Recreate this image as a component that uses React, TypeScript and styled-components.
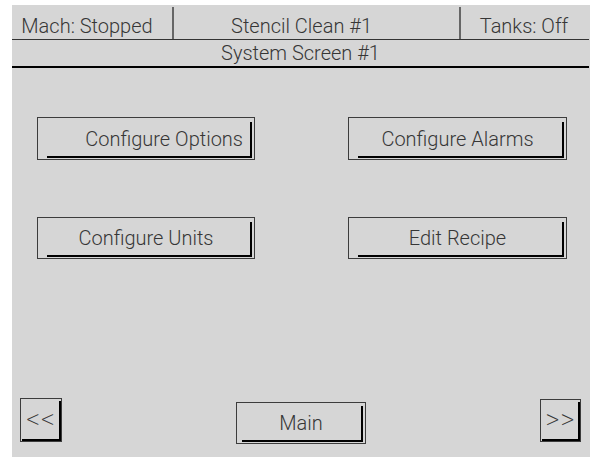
import React from "react";
import styled, { createGlobalStyle } from "styled-components";

const Global = createGlobalStyle`
  html, body { margin: 0; padding: 0; background: #ffffff; }
  body { font-family: Roboto, "Liberation Sans", sans-serif; }
`;

const Panel = styled.div`
  box-sizing: border-box;
  margin: 5px 3px 0 12px;
  width: 578px;
  height: 452px;
  background: #d6d6d6;
  color: #363636;
  font-family: Roboto, "Liberation Sans", sans-serif;
  font-weight: 300;
  font-size: 20px;
  display: flex;
  flex-direction: column;
`;

const StatusRow = styled.div`
  display: grid;
  grid-template-columns: 160px 287px 1fr;
  height: 35px;
  padding-top: 2px;
  box-sizing: border-box;
  border-bottom: 1px solid #333;
  margin-right: 1px;
`;

const StatusCell = styled.div<{ $divider?: boolean; $shift?: number }>`
  display: flex;
  align-items: flex-end;
  justify-content: center;
  border-left: ${(p) => (p.$divider ? "2px solid #666" : "none")};
  padding-left: ${(p) => (p.$shift && p.$shift > 0 ? p.$shift : 0)}px;
  padding-right: ${(p) => (p.$shift && p.$shift < 0 ? -p.$shift : 0)}px;
  padding-bottom: 3px;
  white-space: nowrap;
  line-height: 1;
`;

const TitleRow = styled.div`
  height: 26px;
  display: flex;
  align-items: center;
  justify-content: center;
  border-bottom: 2px solid #000;
  margin-right: 1px;
  line-height: 1;
`;

const ButtonGrid = styled.div`
  display: grid;
  grid-template-columns: 218px 219px;
  column-gap: 93px;
  row-gap: 57px;
  padding: 49px 0 0 25px;
`;

const PanelButton = styled.div<{
  $h: number;
  $inset: number;
  $lead: number;
  $top: number;
  $align?: "center" | "right";
  $pad?: number;
}>`
  position: relative;
  box-sizing: border-box;
  height: ${(p) => p.$h}px;
  border: 1px solid #3c3c3c;
  display: flex;
  align-items: center;
  justify-content: ${(p) => (p.$align === "right" ? "flex-end" : "center")};
  padding-right: ${(p) => p.$pad || 0}px;
  white-space: nowrap;
  line-height: 1;
  &::after {
    content: "";
    position: absolute;
    left: ${(p) => p.$lead}px;
    top: ${(p) => p.$top}px;
    right: ${(p) => p.$inset}px;
    bottom: ${(p) => Math.max(p.$inset - 1, 0)}px;
    border-right: 2px solid #000;
    border-bottom: 2px solid #000;
  }
`;

const NavRow = styled.div`
  margin-top: auto;
  margin-bottom: 13px;
  display: flex;
  justify-content: space-between;
  align-items: flex-start;
  padding: 0 9px 0 8px;
`;

const NavButton = styled(PanelButton)<{ $w: number; $dy: number; $arrow?: boolean }>`
  width: ${(p) => p.$w}px;
  margin-top: ${(p) => p.$dy}px;
  font-size: ${(p) => (p.$arrow ? 27 : 20)}px;
  font-weight: ${(p) => (p.$arrow ? 200 : 300)};
  letter-spacing: ${(p) => (p.$arrow ? "1px" : "0")};
`;

export default function App() {
  return (
    <>
      <Global />
      <Panel>
        <StatusRow>
          <StatusCell $shift={-10}>Mach: Stopped</StatusCell>
          <StatusCell $divider $shift={-30}>Stencil Clean #1</StatusCell>
          <StatusCell $divider $shift={-2}>Tanks: Off</StatusCell>
        </StatusRow>
        <TitleRow>System Screen #1</TitleRow>
        <ButtonGrid>
          <PanelButton $h={43} $inset={2} $lead={9} $top={4} $align="right" $pad={11}>
            Configure Options
          </PanelButton>
          <PanelButton $h={43} $inset={2} $lead={9} $top={4}>
            Configure Alarms
          </PanelButton>
          <PanelButton $h={42} $inset={2} $lead={9} $top={4}>
            Configure Units
          </PanelButton>
          <PanelButton $h={42} $inset={2} $lead={9} $top={4}>
            Edit Recipe
          </PanelButton>
        </ButtonGrid>
        <NavRow>
          <NavButton $arrow $w={42} $h={44} $dy={0} $inset={0} $lead={1} $top={2}>
            &lt;&lt;
          </NavButton>
          <NavButton $w={130} $h={42} $dy={4} $inset={2} $lead={5} $top={3}>
            Main
          </NavButton>
          <NavButton $arrow $w={41} $h={43} $dy={1} $inset={0} $lead={1} $top={2}>
            &gt;&gt;
          </NavButton>
        </NavRow>
      </Panel>
    </>
  );
}
